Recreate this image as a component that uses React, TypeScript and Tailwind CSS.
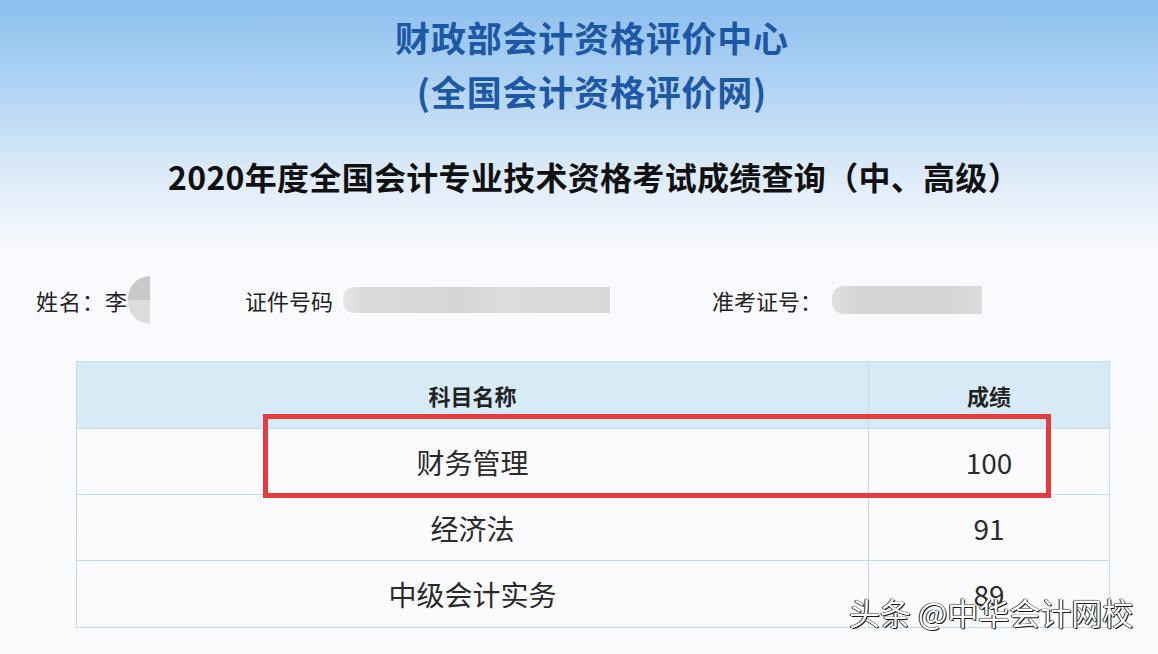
const rows = [
  { name: "财务管理", score: "100" },
  { name: "经济法", score: "91" },
  { name: "中级会计实务", score: "89" },
];

export default function App() {
  return (
    <div
      className="relative w-[1158px] h-[654px] overflow-hidden bg-[linear-gradient(to_bottom,#8cbfee_0px,#b3d4f3_90px,#dbeaf8_170px,#f8fafd_250px,#fafbfd_654px)] font-['Noto_Sans_CJK_SC','Noto_Sans',sans-serif]"
    >
      {/* 标题 */}
      <div className="flex flex-col items-center pt-[10px] pl-[26px]">
        <div className="h-[54px] leading-[54px] text-[35px] font-bold text-[#1d58a6] tracking-[0.8px]">
          财政部会计资格评价中心
        </div>
        <div className="h-[54px] leading-[54px] text-[35px] font-bold text-[#1d58a6] tracking-[0.8px]">
          (全国会计资格评价网)
        </div>
        <div className="mt-[38px] h-[40px] leading-[40px] text-[32px] font-bold text-[#111] tracking-[0.3px] ml-[4px]">
          2020年度全国会计专业技术资格考试成绩查询（中、高级）
        </div>
      </div>

      {/* 考生信息 */}
      <div className="mt-[89px] flex items-center h-[30px] pl-[36px] text-[22px] text-[#222]">
        <div className="flex items-center w-[209px]">
          <span className="tracking-[1px]">姓名：李</span>
          <div className="h-[48px] w-[22px] rounded-l-full bg-[linear-gradient(to_bottom,#c9c9cc_50%,#dcdcdf_50%)] blur-[0.5px]" />
        </div>
        <div className="flex items-center w-[467px]">
          <span>证件号码</span>
          <div className="ml-[10px] h-[26px] w-[267px] rounded-l-[10px] bg-[linear-gradient(to_right,#e8e8ea_0px,#dadadc_20px,#d6d6d8_120px,#dcdcde_160px,#d8d8da_267px)] blur-[0.5px]" />
        </div>
        <div className="flex items-center">
          <span>准考证号：</span>
          <div className="ml-[10px] h-[28px] w-[150px] rounded-l-[12px] bg-[linear-gradient(to_right,#e0e0e2_0px,#d4d4d6_30px,#d6d6d8_120px,#dcdcde_150px)] blur-[0.5px]" />
        </div>
      </div>

      {/* 成绩表 */}
      <div className="relative ml-[76px] mt-[46px] w-[1034px] border border-[#c3dbea] bg-[#fbfbfd]">
        <div className="flex h-[67px] bg-[#d7ebf6] border-b border-[#c3dbea] text-[22px] font-bold text-[#222]">
          <div className="w-[792px] flex items-center justify-center border-r border-[#c3dbea]">
            科目名称
          </div>
          <div className="flex-1 flex items-center justify-center">成绩</div>
        </div>
        {rows.map((r, i) => (
          <div
            key={r.name}
            className={`flex h-[66px] text-[28px] text-[#2a2a2a] ${
              i < rows.length - 1 ? "border-b border-[#c3dbea]" : ""
            }`}
          >
            <div className="w-[792px] flex items-center justify-center border-r border-[#c3dbea]">
              {r.name}
            </div>
            <div className="flex-1 flex items-center justify-center">{r.score}</div>
          </div>
        ))}

        {/* 红框 */}
        <div className="absolute left-[186px] top-[52px] w-[788px] h-[84px] border-[5px] border-[#e63a3d]" />
      </div>

      {/* 水印 */}
      <div className="absolute left-[849px] top-[593px] text-[31px] leading-[38px] text-white [text-shadow:0_0_1px_#000,0_0_1px_#000,1px_1px_0_#222,-1px_0_0_#555]">
        头条 @中华会计网校
      </div>
    </div>
  );
}
